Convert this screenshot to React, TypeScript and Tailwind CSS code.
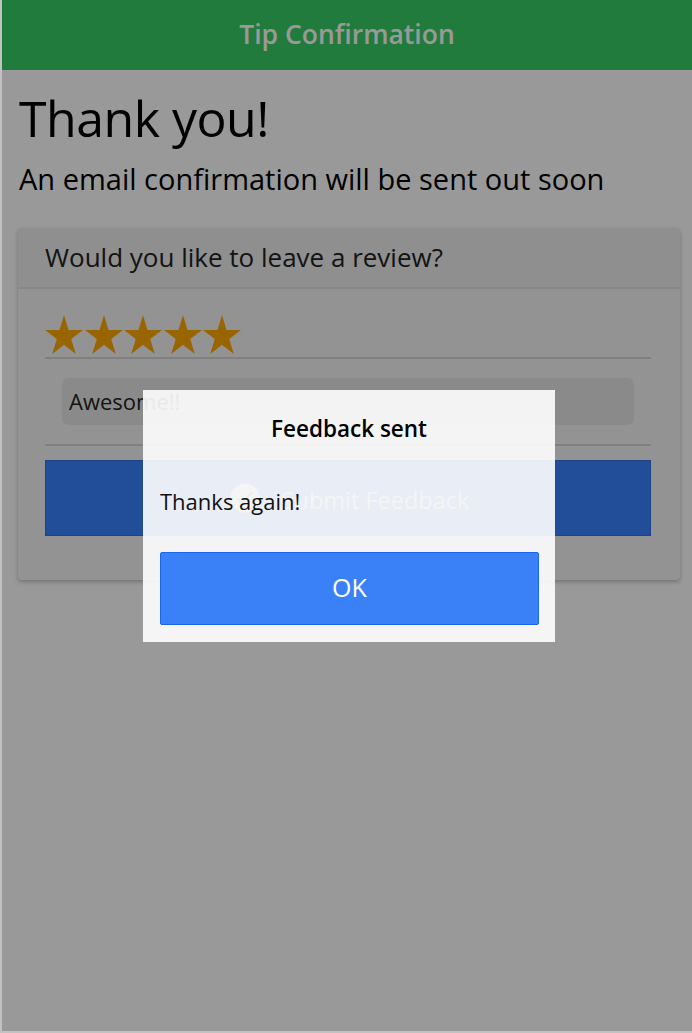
function Star() {
  return (
    <svg viewBox="-0.951 -1 1.902 1.809" preserveAspectRatio="none" className="h-[39px] w-[38px]">
      <path
        d="M0 -1L0.2245 -0.309L0.951 -0.309L0.363 0.118L0.588 0.809L0 0.382L-0.588 0.809L-0.363 0.118L-0.951 -0.309L-0.2245 -0.309Z"
        fill="#ffa800"
      />
    </svg>
  );
}

function CheckmarkCircle() {
  return (
    <svg viewBox="0 0 512 512" className="h-[36px] w-[36px]">
      <path
        fill="#ffffff"
        d="M256 48C141.31 48 48 141.31 48 256s93.31 208 208 208 208-93.31 208-208S370.69 48 256 48zm108.25 138.29l-134.4 160a16 16 0 01-12 5.71h-.27a16 16 0 01-11.89-5.3l-57.6-64a16 16 0 1123.78-21.4l45.29 50.32 122.59-145.91a16 16 0 0124.5 20.58z"
      />
    </svg>
  );
}

export default function App() {
  const font = { fontFamily: '"Open Sans", "Noto Sans", sans-serif' };

  return (
    <div
      className="relative h-[1033px] w-[692px] overflow-hidden border-l-2 border-b-2 border-[#c2c2c2] bg-white"
      style={font}
    >
      <header className="flex h-[70px] items-center justify-center bg-[#37cd64]">
        <h2 className="text-[26.5px] font-semibold text-white">Tip Confirmation</h2>
      </header>

      <main className="pt-[20px]">
        <div className="px-[17px]">
          <h1 className="text-[50px] font-normal leading-[56px] tracking-[-0.5px] text-black">Thank you!</h1>
          <p className="mt-[15px] text-[29px] leading-[36px] text-black">
            An email confirmation will be sent out soon
          </p>
        </div>

        <section className="ml-[16px] mr-[12px] mt-[31px] rounded-[4px] bg-[#f6f6f6] pb-[44px] shadow-[0_2px_4px_rgba(0,0,0,0.25)]">
          <div className="flex h-[61px] items-center rounded-t-[4px] border-b-2 border-[#e3e3e3] bg-[#eeeeee] pl-[27px]">
            <h3 className="text-[26px] text-[#222]">Would you like to leave a review?</h3>
          </div>

          <div className="pl-[27px] pr-[29px] pt-[26px]">
            <div className="flex gap-[1.6px] border-b-2 border-[#d6d6d6] pb-[3px]">
              <Star />
              <Star />
              <Star />
              <Star />
              <Star />
            </div>

            <div className="border-b-2 border-[#d6d6d6] px-[17px] py-[19px]">
              <div className="flex h-[47px] items-center rounded-[6px] bg-[#e7e7e7] px-[7px]">
                <span className="text-[22px] text-[#222]">Awesome!!</span>
              </div>
            </div>

            <button
              type="button"
              className="mt-[14px] flex h-[76px] w-full items-center justify-center gap-[19px] border border-[#3371e0] bg-[#3880ff] text-white"
            >
              <CheckmarkCircle />
              <span className="pt-[5px] text-[23.5px]">Submit Feedback</span>
            </button>
          </div>
        </section>
      </main>

      {/* overlay */}
      <div className="absolute inset-0 flex items-center justify-center bg-black/40">
        <div className="ml-[4px] w-[412px] bg-white/90">
          <div className="flex h-[72px] items-center justify-center pt-[6px]">
            <h2 className="text-[22.5px] font-semibold text-black">Feedback sent</h2>
          </div>
          <div className="flex h-[76px] items-center px-[17px] pt-[4px]">
            <p className="text-[22px] text-[#111]">Thanks again!</p>
          </div>
          <div className="pb-[17px] pl-[17px] pr-[16px] pt-[14px]">
            <button
              type="button"
              className="flex h-[73px] w-full items-center justify-center rounded-[2px] border border-[#1a66ea] bg-[#3a80f6] text-[25px] text-white"
            >
              OK
            </button>
          </div>
        </div>
      </div>
    </div>
  );
}
